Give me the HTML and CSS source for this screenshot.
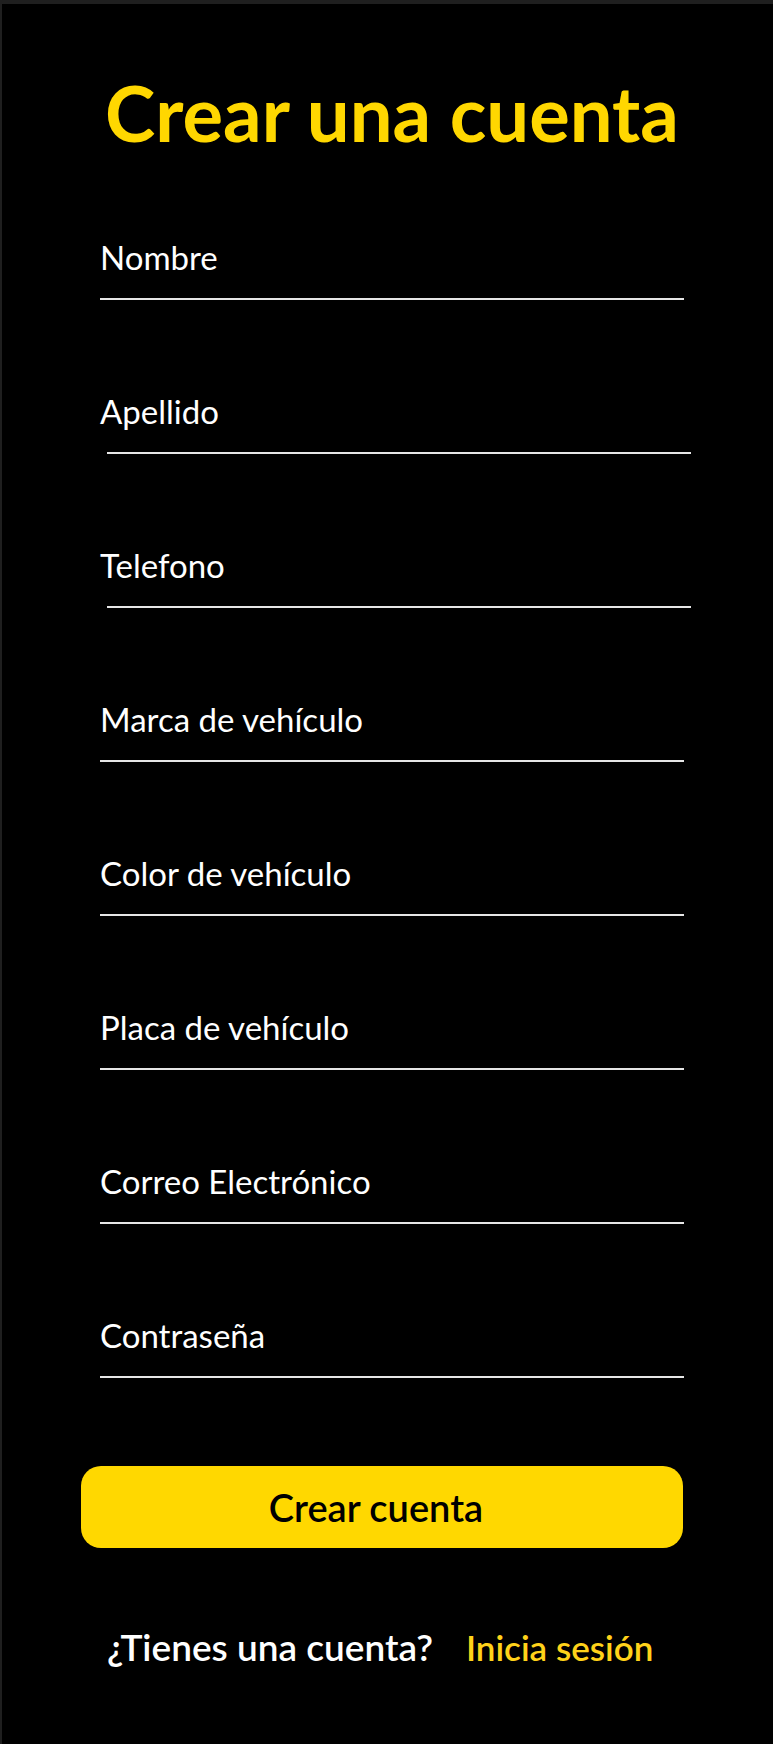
FILE: index.html
```html
<!DOCTYPE html>
<html lang="es">
<head>
<meta charset="utf-8">
<title>Crear una cuenta</title>
<link rel="stylesheet" href="styles.css">
</head>
<body>
<main class="screen">
  <h1 class="title">Crear una cuenta</h1>
  <form class="form">
    <div class="field">
      <label class="label" for="nombre">Nombre</label>
      <input class="input" id="nombre" type="text">
    </div>
    <div class="field">
      <label class="label" for="apellido">Apellido</label>
      <input class="input input--shift" id="apellido" type="text">
    </div>
    <div class="field">
      <label class="label" for="telefono">Telefono</label>
      <input class="input input--shift" id="telefono" type="tel">
    </div>
    <div class="field">
      <label class="label" for="marca">Marca de vehículo</label>
      <input class="input" id="marca" type="text">
    </div>
    <div class="field">
      <label class="label" for="color">Color de vehículo</label>
      <input class="input" id="color" type="text">
    </div>
    <div class="field">
      <label class="label" for="placa">Placa de vehículo</label>
      <input class="input" id="placa" type="text">
    </div>
    <div class="field">
      <label class="label" for="correo">Correo Electrónico</label>
      <input class="input" id="correo" type="email">
    </div>
    <div class="field">
      <label class="label" for="pass">Contraseña</label>
      <input class="input" id="pass" type="password">
    </div>
    <button class="submit" type="button">Crear cuenta</button>
  </form>
  <p class="footer">
    <span class="footer-q">¿Tienes una cuenta?</span>
    <a class="footer-link" href="#">Inicia sesión</a>
  </p>
</main>
</body>
</html>
```

FILE: styles.css
```css
html, body {
  margin: 0;
  padding: 0;
  background: #000;
}

body {
  font-family: "Lato", "Open Sans", sans-serif;
  color: #fff;
}

.screen {
  min-height: 1740px;
  border-top: 4px solid #1f1f1f;
  border-left: 2px solid #1f1f1f;
  background: #000;
}

.title {
  margin: 71px 0 0 98px;
  width: 584px;
  text-align: center;
  font-size: 76px;
  line-height: 76px;
  font-weight: 700;
  color: #ffd700;
}

.form {
  display: flex;
  flex-direction: column;
  margin-top: 90px;
}

.field {
  display: flex;
  flex-direction: column;
  width: 584px;
  margin-left: 98px;
  margin-bottom: 95px;
}

.label {
  font-size: 33px;
  line-height: 32px;
  color: #fff;
}

.input {
  height: 25px;
  padding: 0;
  margin: 0;
  border: none;
  border-bottom: 2px solid #e6e6e6;
  background: transparent;
  color: #fff;
  outline: none;
}

.input--shift {
  margin: 0 -7px 0 7px;
}

.submit {
  margin: -7px 0 0 79px;
  width: 602px;
  height: 82px;
  padding: 0 12px 0 0;
  border: none;
  border-radius: 20px;
  background: #ffd800;
  color: #000;
  font-family: "Lato", "Open Sans", sans-serif;
  font-size: 38px;
  line-height: 38px;
  font-weight: 600;
  cursor: pointer;
}

.footer {
  margin: 80px 0 0 105px;
  display: flex;
  align-items: baseline;
  gap: 33px;
  line-height: 37px;
  font-weight: 600;
}

.footer-q {
  font-size: 37px;
  color: #fff;
}

.footer-link {
  font-size: 35px;
  color: #ffd21a;
  text-decoration: none;
}
```
